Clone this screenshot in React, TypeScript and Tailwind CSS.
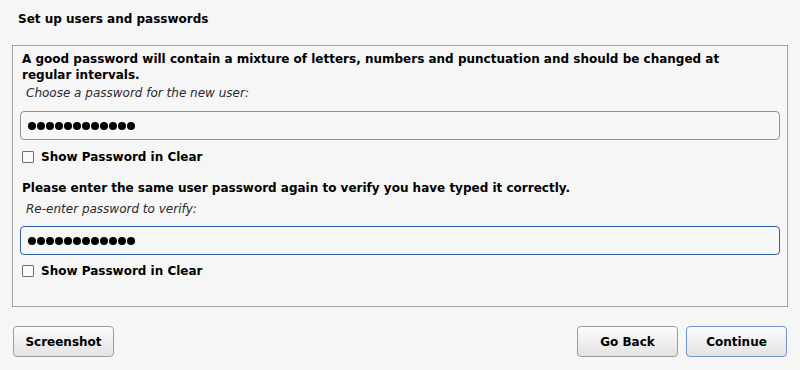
import React from 'react';

const font = { fontFamily: '"DejaVu Sans", "Liberation Sans", sans-serif' };

const PasswordField: React.FC<{ focused?: boolean }> = ({ focused = false }) => (
  <div
    className={`h-[29px] rounded-[4px] border bg-[#f7f7f7] flex items-center gap-[1px] pl-[7px] ${
      focused ? 'border-[#2f5ea6]' : 'border-[#8f8f8f]'
    }`}
  >
    {Array.from({ length: 12 }).map((_, i) => (
      <span key={i} className="w-[8px] h-[8px] rounded-full bg-black" />
    ))}
  </div>
);

const ShowClear: React.FC<{ top: string }> = ({ top }) => (
  <label className={`flex items-center h-[16px] gap-[7px] ml-[2px] text-[12px] font-bold text-black ${top}`}>
    <span className="w-[12px] h-[12px] border border-[#6f6f6f] bg-[#fafafa] rounded-[1px]" />
    Show Password in Clear
  </label>
);

const Button: React.FC<{ label: string; primary?: boolean }> = ({ label, primary = false }) => (
  <button
    className={`h-[31px] w-[101px] rounded-[4px] border text-[12px] font-bold text-black bg-gradient-to-b from-[#fbfbfb] to-[#e3e3e3] ${
      primary ? 'border-[#7094cf]' : 'border-[#9c9c9c]'
    }`}
  >
    {label}
  </button>
);

export default function App() {
  return (
    <div style={font} className="w-[800px] h-[370px] bg-[#f6f6f6] text-black overflow-hidden flex flex-col">
      <h1 className="text-[12px] font-bold leading-[16px] pl-[18px] pt-[11px] h-[45px]">
        Set up users and passwords
      </h1>

      <div className="mx-[12px] border border-[#a6a6a6] h-[262px] px-[7px] pt-[5px]">
        <p className="w-[712px] text-[12px] font-bold leading-[16px] ml-[2px]">
          A good password will contain a mixture of letters, numbers and punctuation and should be changed at
          regular intervals.
        </p>
        <p className="text-[12px] italic leading-[16px] text-[#2a2a2a] ml-[6px] mt-[2px] mb-[10px]">
          Choose a password for the new user:
        </p>
        <PasswordField />
        <ShowClear top="mt-[9px]" />

        <p className="text-[12px] font-bold leading-[16px] mt-[15px] ml-[2px]">
          Please enter the same user password again to verify you have typed it correctly.
        </p>
        <p className="text-[12px] italic leading-[16px] text-[#2a2a2a] ml-[6px] mt-[5px] mb-[9px]">
          Re-enter password to verify:
        </p>
        <PasswordField focused />
        <ShowClear top="mt-[8px]" />
      </div>

      <div className="flex items-center justify-between mt-[19px] pl-[13px] pr-[13px]">
        <Button label="Screenshot" />
        <div className="flex gap-[8px]">
          <Button label="Go Back" />
          <Button label="Continue" primary />
        </div>
      </div>
    </div>
  );
}
